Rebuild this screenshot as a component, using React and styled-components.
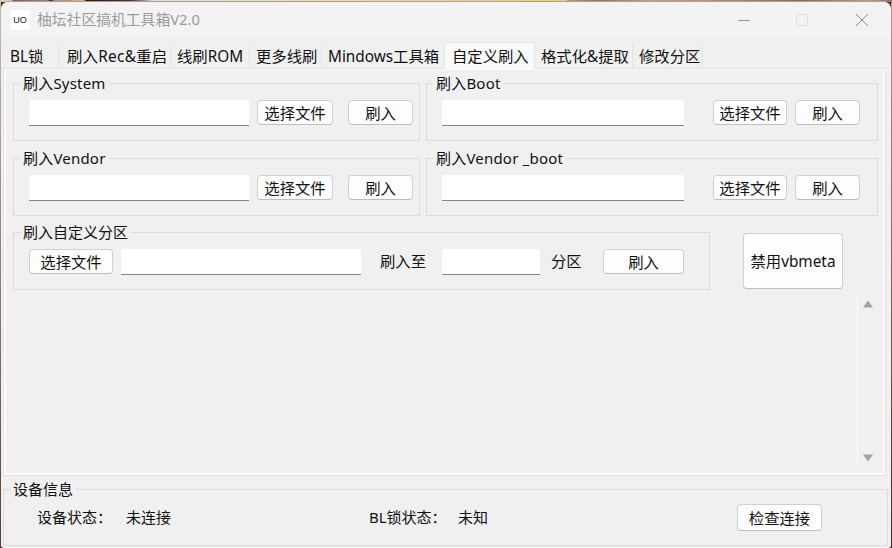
import React from "react";
import styled, { createGlobalStyle } from "styled-components";

const Global = createGlobalStyle`
  html, body { margin: 0; padding: 0; }
  body { font-family: "Noto Sans", "Noto Sans CJK SC", sans-serif; font-size: 15.33px; color: #111; }
  * { box-sizing: border-box; }
`;

const Page = styled.div`
  width: 892px;
  height: 548px;
  overflow: hidden;
  padding: 2px 1px 0;
  background:
    linear-gradient(90deg, #d8c9bb 0, #d8c9bb 12px, #7a5f55 13px, #9a8378 48px, #2b211e 50px, #b09a8d 55px, #a89080 70px, #e8a878 74px, #e8a878 84px, #2a1d18 86px, #4a3228 130px, #a09a96 146px, #e4dccf 152px, #e9dcc4 280px, #ecd9b0 320px, #e8cb98 566px, #b89880 568px, #8f7566 600px, #c8a088 650px, #bd9379 700px, #8a6a58 800px, #c09a82 870px, #8a7468 892px) top / 100% 2px no-repeat,
    linear-gradient(180deg, #c9bcae, #5a3d30) left / 1px 100% no-repeat,
    linear-gradient(180deg, #b59a88, #3a2c26) right / 1px 100% no-repeat,
    #3a2a24;
`;

const Window = styled.div`
  width: 890px;
  height: 546px;
  display: flex;
  flex-direction: column;
  background: #f0f0f0;
  border-radius: 8px 8px 3px 3px;
  box-shadow: 0 -1px 0 #a3a09c;
`;

const TitleBar = styled.header`
  height: 36px;
  flex: none;
  display: flex;
  align-items: center;
  padding-left: 9px;
  background: #f3f3f3;
  border-radius: 8px 8px 0 0;
`;

const Logo = styled.div`
  width: 20px;
  height: 20px;
  flex: none;
  display: flex;
  align-items: center;
  justify-content: center;
  background: #fff;
  border-radius: 3px;
  font-family: "Liberation Sans", sans-serif;
  font-size: 9px;
  color: #111;
`;

const Title = styled.div`
  margin-left: 7px;
  margin-bottom: 2px;
  flex: 1;
  font-size: 14.8px;
  line-height: 20px;
  color: #9b9b9b;
`;

const WinIcon = styled.svg`
  width: 14px;
  height: 14px;
  flex: none;
  display: block;
  margin-right: ${(p) => p.$right}px;
`;

const TabBar = styled.nav`
  height: 30px;
  flex: none;
  display: flex;
  align-items: flex-end;
  padding-left: 4px;
`;

const Tab = styled.div`
  width: ${(p) => p.$width}px;
  height: ${(p) => (p.$active ? 27 : 24)}px;
  margin-right: 1px;
  flex: none;
  display: flex;
  align-items: center;
  padding-left: ${(p) => p.$pad}px;
  padding-bottom: 2px;
  white-space: nowrap;
  font-size: 15.33px;
  letter-spacing: ${(p) => p.$tracking || 0}px;
  color: #111;
  background: ${(p) => (p.$active ? "#f9f9f9" : "#f0f0f0")};
  box-shadow: 1px 0 0 #e4e4e4;
  ${(p) => p.$active && "border-top: 1px solid #e6e6e6; position: relative; margin-bottom: -1px;"}
`;

const Pane = styled.main`
  width: 883px;
  height: 408px;
  margin-left: 2px;
  flex: none;
  display: flex;
  flex-direction: column;
  padding: 14px 0 7px 9px;
  border: 1px solid #e2e2e2;
  box-shadow: inset 2px 0 0 #fbfbfb, inset -2px 0 0 #fbfbfb, inset 0 -2px 0 #fbfbfb, inset 0 1px 0 #fbfbfb;
`;

const GroupGrid = styled.div`
  display: grid;
  grid-template-columns: 407px 452px;
  grid-auto-rows: 58px;
  column-gap: 6px;
  row-gap: 17px;
`;

const Group = styled.section`
  width: ${(p) => (p.$width ? `${p.$width}px` : "auto")};
  height: 58px;
  flex: none;
  border: 1px solid #dcdcdc;
`;

const Legend = styled.div`
  width: fit-content;
  height: 20px;
  margin: -10px 0 0 6px;
  padding: 0 3px;
  line-height: 18px;
  font-size: 15px;
  letter-spacing: ${(p) => p.$tracking || 0}px;
  color: #111;
  background: #f0f0f0;
`;

const Row = styled.div`
  display: flex;
  align-items: flex-start;
  padding: 6px 0 0 15px;
`;

const Input = styled.div`
  width: ${(p) => p.$width}px;
  height: 26px;
  margin-left: ${(p) => p.$left || 0}px;
  flex: none;
  background: #fff;
  border-bottom: 1px solid #858585;
  border-radius: 2px 2px 0 0;
`;

const Button = styled.button`
  width: ${(p) => p.$width}px;
  height: ${(p) => p.$height || 25}px;
  margin-left: ${(p) => p.$left || 0}px;
  margin-top: ${(p) => p.$topGap || 0}px;
  flex: none;
  padding: 0 0 2px;
  font: inherit;
  font-size: 15.33px;
  color: #111;
  background: #fdfdfd;
  border: 1px solid #d0d0d0;
  border-bottom-color: #bdbdbd;
  border-radius: 4px;
`;

const Label = styled.span`
  width: ${(p) => p.$width}px;
  height: 26px;
  margin-left: ${(p) => p.$left || 0}px;
  flex: none;
  line-height: 24px;
  white-space: nowrap;
  color: #111;
`;

const CustomRow = styled.div`
  display: flex;
  align-items: flex-start;
  margin-top: 16px;
`;

const ScrollTrack = styled.div`
  width: 21px;
  flex: 1;
  margin: 4px 0 0 844px;
  display: flex;
  flex-direction: column;
  align-items: center;
  justify-content: space-between;
  padding: 6px 0 6px;
  border-left: 1px solid #fbfbfb;
`;

const Arrow = styled.svg`
  width: 10px;
  height: 8px;
  display: block;
`;

const Info = styled.section`
  width: 885px;
  height: 57px;
  margin: 13px 0 0 2px;
  flex: none;
  border: 1px solid #dcdcdc;
`;

const InfoRow = styled.div`
  display: flex;
  align-items: center;
  padding: 4px 0 0 33px;
  font-size: 15px;
`;

const tabs = [
  ["BL锁", 53, 5],
  ["刷入Rec&重启", 111, 8, 0.3],
  ["线刷ROM", 78, 6],
  ["更多线刷", 71, 6],
  ["Mindows工具箱", 122, 6],
  ["自定义刷入", 89, 7],
  ["格式化&提取", 97, 6],
  ["修改分区", 69, 6],
];

const FlashGroup = ({ title, inputWidth, fileLeft, fileWidth, flashLeft }) => (
  <Group>
    <Legend $tracking={0.2}>{title}</Legend>
    <Row>
      <Input $width={inputWidth} />
      <Button $width={fileWidth} $left={fileLeft}>选择文件</Button>
      <Button $width={65} $left={flashLeft}>刷入</Button>
    </Row>
  </Group>
);

export default function App() {
  return (
    <Page>
      <Global />
      <Window>
        <TitleBar>
          <Logo>UO</Logo>
          <Title>柚坛社区搞机工具箱V2.0</Title>
          <WinIcon $right={44} viewBox="0 0 14 14">
            <path d="M1 7.5h12" stroke="#9a9a9a" strokeWidth="1" />
          </WinIcon>
          <WinIcon $right={46} viewBox="0 0 14 14">
            <rect x="1.5" y="1.5" width="11" height="11" rx="2" fill="none" stroke="#dedede" />
          </WinIcon>
          <WinIcon $right={22} viewBox="0 0 14 14">
            <path d="M1 1l12 12M13 1L1 13" stroke="#8a8a8a" strokeWidth="1" />
          </WinIcon>
        </TitleBar>
        <TabBar>
          {tabs.map(([label, width, pad, tracking]) => (
            <Tab key={label} $width={width} $pad={pad} $tracking={tracking} $active={label === "自定义刷入"}>{label}</Tab>
          ))}
        </TabBar>
        <Pane>
          <GroupGrid>
            <FlashGroup title="刷入System" inputWidth={220} fileWidth={76} fileLeft={8} flashLeft={15} />
            <FlashGroup title="刷入Boot" inputWidth={242} fileWidth={74} fileLeft={29} flashLeft={8} />
            <FlashGroup title="刷入Vendor" inputWidth={220} fileWidth={76} fileLeft={8} flashLeft={15} />
            <FlashGroup title="刷入Vendor _boot" inputWidth={242} fileWidth={74} fileLeft={29} flashLeft={8} />
          </GroupGrid>
          <CustomRow>
            <Group $width={697}>
              <Legend>刷入自定义分区</Legend>
              <Row>
                <Button $width={84}>选择文件</Button>
                <Input $width={240} $left={8} />
                <Label $width={46} $left={19}>刷入至</Label>
                <Input $width={98} $left={16} />
                <Label $width={30} $left={11}>分区</Label>
                <Button $width={81} $left={22}>刷入</Button>
              </Row>
            </Group>
            <Button $width={100} $height={56} $left={33} $topGap={1}>禁用vbmeta</Button>
          </CustomRow>
          <ScrollTrack>
            <Arrow viewBox="0 0 10 8"><path d="M5 0.5L10 7.5H0z" fill="#a3a3a3" /></Arrow>
            <Arrow viewBox="0 0 10 8"><path d="M5 7.5L0 0.5H10z" fill="#a3a3a3" /></Arrow>
          </ScrollTrack>
        </Pane>
        <Info>
          <Legend>设备信息</Legend>
          <InfoRow>
            <Label $width={89}>设备状态：</Label>
            <Label $width={243}>未连接</Label>
            <Label $width={89}>BL锁状态：</Label>
            <Label $width={279}>未知</Label>
            <Button $width={85} $height={27}>检查连接</Button>
          </InfoRow>
        </Info>
      </Window>
    </Page>
  );
}
